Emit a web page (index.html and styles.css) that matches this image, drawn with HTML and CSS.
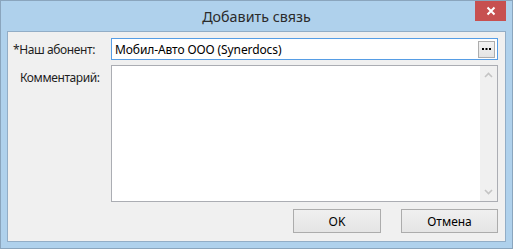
FILE: index.html
```html
<!DOCTYPE html>
<html lang="ru">
<head>
    <meta charset="UTF-8">
    <title>Добавить связь</title>
    <link rel="stylesheet" href="styles.css">
</head>
<body>
    <div class="window">
        <div class="titlebar">
            <span class="title">Добавить связь</span>
            <button class="close-btn">
                <svg width="10" height="10" viewBox="0 0 10 10">
                    <path d="M1.5 1.5 L8.5 8.5 M8.5 1.5 L1.5 8.5" stroke="#fff" stroke-width="2"/>
                </svg>
            </button>
        </div>

        <div class="frame">
            <div class="form">
                <label class="label label-first">*Наш абонент:</label>
                <div class="field">
                    <span class="field-text">Мобил-Авто ООО (Synerdocs)</span>
                    <button class="dots-btn">
                        <svg width="9" height="3" viewBox="0 0 9 3">
                            <rect x="0" y="0" width="2" height="2" fill="#000"/>
                            <rect x="3.5" y="0" width="2" height="2" fill="#000"/>
                            <rect x="7" y="0" width="2" height="2" fill="#000"/>
                        </svg>
                    </button>
                </div>

                <label class="label label-second">Комментарий:</label>
                <div class="memo">
                    <div class="memo-text"></div>
                    <div class="scrollbar">
                        <svg width="9" height="6" viewBox="0 0 9 6">
                            <path d="M1 5 L4.5 1.5 L8 5" fill="none" stroke="#c4c4c4" stroke-width="1.6"/>
                        </svg>
                        <svg width="9" height="6" viewBox="0 0 9 6">
                            <path d="M1 1 L4.5 4.5 L8 1" fill="none" stroke="#c4c4c4" stroke-width="1.6"/>
                        </svg>
                    </div>
                </div>
            </div>

            <div class="buttons">
                <button class="btn btn-ok">OK</button>
                <button class="btn btn-cancel">Отмена</button>
            </div>
        </div>
    </div>
</body>
</html>
```

FILE: styles.css
```css
body {
    margin: 0;
    padding: 0;
    font-family: 'Noto Sans', 'Open Sans', sans-serif;
    font-size: 12px;
    color: #000;
}
.window {
    width: 513px;
    height: 249px;
    box-sizing: border-box;
    border: 1px solid #8aa5bd;
    background-color: #afd1ec;
    padding: 0 6px 6px 6px;
    display: flex;
    flex-direction: column;
    position: relative;
}
.titlebar {
    height: 30px;
    display: flex;
    justify-content: center;
    align-items: center;
}
.title {
    font-size: 14.3px;
    color: #2b2b2b;
    margin-top: 1px;
}
.close-btn {
    position: absolute;
    top: 0;
    right: 6px;
    width: 31px;
    height: 20px;
    border: none;
    padding: 0;
    background-color: #c75050;
    display: flex;
    justify-content: center;
    align-items: center;
}
.frame {
    flex: 1;
    border: 1px solid #92adc6;
    background-color: #f0f0f0;
    display: flex;
    flex-direction: column;
    padding: 6px 7px 8px 0;
}
.form {
    display: grid;
    grid-template-columns: 103px 1fr;
    grid-template-rows: 22px 137px;
    row-gap: 5px;
}
.label {
    color: #1e1e1e;
    white-space: nowrap;
    font-size: 12px;
    letter-spacing: -0.4px;
}
.label-first {
    padding: 3px 0 0 5px;
}
.label-second {
    padding: 4px 0 0 12px;
}
.field {
    border: 1px solid #569de5;
    background-color: #fff;
    display: flex;
    align-items: center;
    justify-content: space-between;
    padding: 0 2px 0 3px;
}
.field-text {
    white-space: nowrap;
    letter-spacing: -0.1px;
}
.dots-btn {
    width: 17px;
    height: 17px;
    padding: 0;
    border: 1px solid #adadad;
    background: linear-gradient(#f2f2f2, #e4e4e4);
    display: flex;
    justify-content: center;
    align-items: center;
}
.memo {
    border: 1px solid #abadb3;
    background-color: #fff;
    display: flex;
}
.memo-text {
    flex: 1;
}
.scrollbar {
    width: 17px;
    background-color: #f0f0f0;
    display: flex;
    flex-direction: column;
    justify-content: space-between;
    align-items: center;
    padding: 6px 0 6px;
}
.buttons {
    margin-top: auto;
    display: flex;
    justify-content: flex-end;
    gap: 20px;
}
.btn {
    height: 24px;
    padding: 0;
    border: 1px solid #acacac;
    background: linear-gradient(#f0f0f0, #e5e5e5);
    font-family: 'Noto Sans', 'Open Sans', sans-serif;
    font-size: 12px;
    color: #000;
}
.btn-ok {
    width: 88px;
}
.btn-cancel {
    width: 97px;
}
```
